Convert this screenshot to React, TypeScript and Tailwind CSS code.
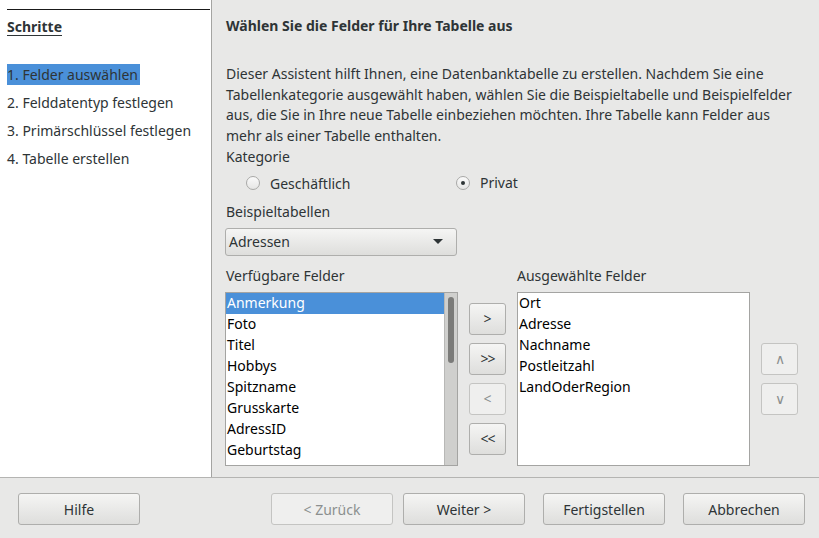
import React from 'react';

const font = { fontFamily: '"Noto Sans", "Open Sans", sans-serif' };

const steps = [
  '1. Felder auswählen',
  '2. Felddatentyp festlegen',
  '3. Primärschlüssel festlegen',
  '4. Tabelle erstellen',
];

const available = [
  'Anmerkung',
  'Foto',
  'Titel',
  'Hobbys',
  'Spitzname',
  'Grusskarte',
  'AdressID',
  'Geburtstag',
];

const chosen = ['Ort', 'Adresse', 'Nachname', 'Postleitzahl', 'LandOderRegion'];

const Btn = ({ label, disabled, className = '' }: any) => (
  <button
    type="button"
    className={`h-[32px] rounded-[3px] border text-[14px] ${
      disabled
        ? 'border-[#c4c4c2] bg-[#efefee] text-[#8c8f8f]'
        : 'border-[#aeaeac] bg-gradient-to-b from-[#f5f5f4] to-[#dededc] text-[#2e3436]'
    } ${className}`}
  >
    {label}
  </button>
);

const Radio = ({ checked, label }: any) => (
  <div className="flex items-center">
    <span className="flex h-[14px] w-[14px] items-center justify-center rounded-full border border-[#a9a9a7] bg-gradient-to-b from-[#fafafa] to-[#e6e6e5]">
      {checked && <span className="h-[4px] w-[4px] rounded-full bg-[#2e3436]" />}
    </span>
    <span className="ml-[10px]">{label}</span>
  </div>
);

export default function App() {
  return (
    <div
      className="flex h-[538px] w-[819px] flex-col overflow-hidden bg-[#e8e8e7] text-[14px] text-[#2e3436]"
      style={font}
    >
      <div className="flex h-[477px]">
        <div className="w-[212px] shrink-0 border-r border-[#a4a4a2] bg-white pl-[7px] pt-[9px]">
          <div className="h-[1px] w-[203px] bg-[#1a1a1a]" />
          <div className="mt-[7px] font-bold leading-[20px] underline underline-offset-[3px]">
            Schritte
          </div>
          <div className="mt-[27px] flex flex-col">
            {steps.map((s, i) => (
              <div key={s} className="h-[28px]">
                <span
                  className={`inline-block h-[21px] leading-[21px] ${
                    i === 0 ? 'bg-[#4a90d9] pr-[2px]' : ''
                  }`}
                >
                  {s}
                </span>
              </div>
            ))}
          </div>
        </div>

        <div className="flex-1 pl-[14px] pt-[16px]">
          <div className="font-bold leading-[20px]">
            Wählen Sie die Felder für Ihre Tabelle aus
          </div>
          <p className="mt-[28px] leading-[20.7px]">
            Dieser Assistent hilft Ihnen, eine Datenbanktabelle zu erstellen. Nachdem Sie eine
            <br />
            Tabellenkategorie ausgewählt haben, wählen Sie die Beispieltabelle und Beispielfelder
            <br />
            aus, die Sie in Ihre neue Tabelle einbeziehen möchten. Ihre Tabelle kann Felder aus
            <br />
            mehr als einer Tabelle enthalten.
          </p>
          <div className="leading-[20.7px]">Kategorie</div>
          <div className="mt-[5px] flex h-[20px] pl-[20px]">
            <div className="w-[210px]">
              <Radio label="Geschäftlich" />
            </div>
            <Radio checked label="Privat" />
          </div>
          <div className="mt-[9px] leading-[20px]">Beispieltabellen</div>
          <div className="mt-[6px] ml-[-1px] flex h-[28px] w-[232px] items-center justify-between rounded-[3px] border border-[#aeaeac] bg-gradient-to-b from-[#f5f5f4] to-[#dededc] pl-[3px] pr-[13px]">
            <span>Adressen</span>
            <svg width="10" height="5" viewBox="0 0 10 5">
              <path d="M0 0 L10 0 L5 5 Z" fill="#2e3436" />
            </svg>
          </div>

          <div className="mt-[10px] flex leading-[20px]">
            <div className="w-[291px]">Verfügbare Felder</div>
            <div>Ausgewählte Felder</div>
          </div>

          <div className="mt-[6px] ml-[-1px] flex items-start">
            <div className="flex h-[174px] w-[233px] overflow-hidden border border-[#a4a4a2] bg-white">
              <div className="flex-1">
                {available.map((f, i) => (
                  <div
                    key={f}
                    className={`h-[21px] pl-[1px] leading-[19px] ${
                      i === 0 ? 'bg-[#4a90d9] text-white' : 'text-black'
                    }`}
                  >
                    {f}
                  </div>
                ))}
              </div>
              <div className="flex w-[13px] justify-center border-l border-[#b8b8b6] bg-[#cfcfcd] pt-[4px]">
                <div className="h-[66px] w-[6px] rounded-full bg-[#7b7b79]" />
              </div>
            </div>

            <div className="ml-[11px] mt-[11px] flex flex-col gap-[8px]">
              <Btn label=">" className="w-[37px]" />
              <Btn label=">>" className="w-[37px] tracking-[-1px]" />
              <Btn label="<" disabled className="w-[37px]" />
              <Btn label="<<" className="w-[37px] tracking-[-1px]" />
            </div>

            <div className="ml-[11px] h-[174px] w-[233px] border border-[#a4a4a2] bg-white text-black">
              {chosen.map((f) => (
                <div key={f} className="h-[21px] pl-[1px] leading-[19px]">
                  {f}
                </div>
              ))}
            </div>

            <div className="ml-[11px] mt-[51px] flex flex-col gap-[8px]">
              <Btn label="∧" disabled className="w-[37px] text-[13px]" />
              <Btn label="∨" disabled className="w-[37px] text-[13px]" />
            </div>
          </div>
        </div>
      </div>

      <div className="flex flex-1 items-start border-t border-[#b4b4b2] pl-[18px] pt-[15px]">
        <Btn label="Hilfe" className="w-[122px]" />
        <Btn label="< Zurück" disabled className="ml-[131px] w-[122px]" />
        <Btn label="Weiter >" className="ml-[10px] w-[122px]" />
        <Btn label="Fertigstellen" className="ml-[18px] w-[122px]" />
        <Btn label="Abbrechen" className="ml-[18px] w-[122px]" />
      </div>
    </div>
  );
}
